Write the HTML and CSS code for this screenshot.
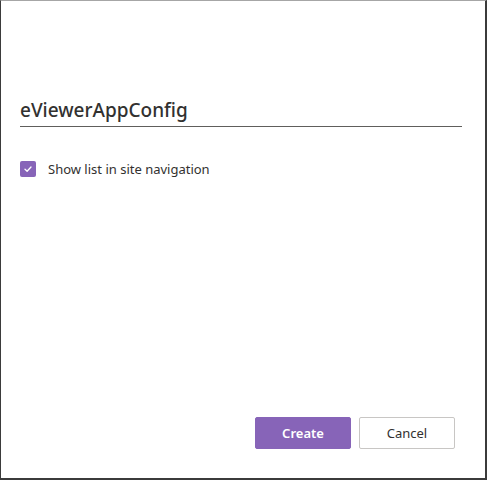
FILE: index.html
```html
<!DOCTYPE html>
<html lang="en">

<head>
  <meta charset="UTF-8">
  <title>Create list</title>
  <link rel="stylesheet" href="styles.css">
</head>

<body>
  <div class="dialog">
    <section class="dialog-body">
      <div class="list-name">eViewerAppConfig</div>
      <label class="check-row">
        <span class="check-box">
          <svg width="10" height="10" viewBox="0 0 10 10">
            <path d="M2 5.2 L4.1 7.2 L8 3" fill="none" stroke="#fff" stroke-width="1.3" stroke-linecap="round" stroke-linejoin="round"/>
          </svg>
        </span>
        <span class="check-label">Show list in site navigation</span>
      </label>
    </section>
    <footer class="dialog-footer">
      <button class="btn btn-primary">Create</button>
      <button class="btn btn-default">Cancel</button>
    </footer>
  </div>
</body>

</html>
```

FILE: styles.css
```css
* {
  margin: 0;
  padding: 0;
  box-sizing: border-box;
  font-family: 'Noto Sans', sans-serif;
}

html,
body {
  width: 100%;
  height: 100%;
  background: #fff;
}

.dialog {
  width: 487px;
  height: 480px;
  border: 1px solid #3b3b3b;
  border-top-color: #a6a6a6;
  border-right-width: 2px;
  border-bottom-width: 2px;
  display: flex;
  flex-direction: column;
  background: #fff;
}

.dialog-body {
  flex: 1;
  padding: 94px 23px 0 19px;
}

.list-name {
  font-size: 19px;
  font-weight: 500;
  color: #323130;
  line-height: 30px;
  padding-bottom: 1px;
  border-bottom: 1px solid #605e5c;
}

.check-row {
  display: flex;
  align-items: center;
  margin-top: 33px;
  cursor: pointer;
}

.check-box {
  width: 16px;
  height: 16px;
  border-radius: 2px;
  background: #8764b8;
  display: flex;
  align-items: center;
  justify-content: center;
}

.check-label {
  margin-left: 12px;
  font-size: 13px;
  color: #323130;
}

.dialog-footer {
  display: flex;
  justify-content: flex-end;
  gap: 8px;
  padding: 0 30px 29px 0;
}

.btn {
  width: 96px;
  height: 32px;
  border-radius: 2px;
  font-size: 13px;
  font-weight: 600;
  cursor: pointer;
}

.btn-primary {
  background: #8764b8;
  border: 1px solid #8764b8;
  color: #fff;
}

.btn-default {
  background: #fff;
  border: 1px solid #c8c6c4;
  color: #323130;
  font-weight: 400;
}
```
